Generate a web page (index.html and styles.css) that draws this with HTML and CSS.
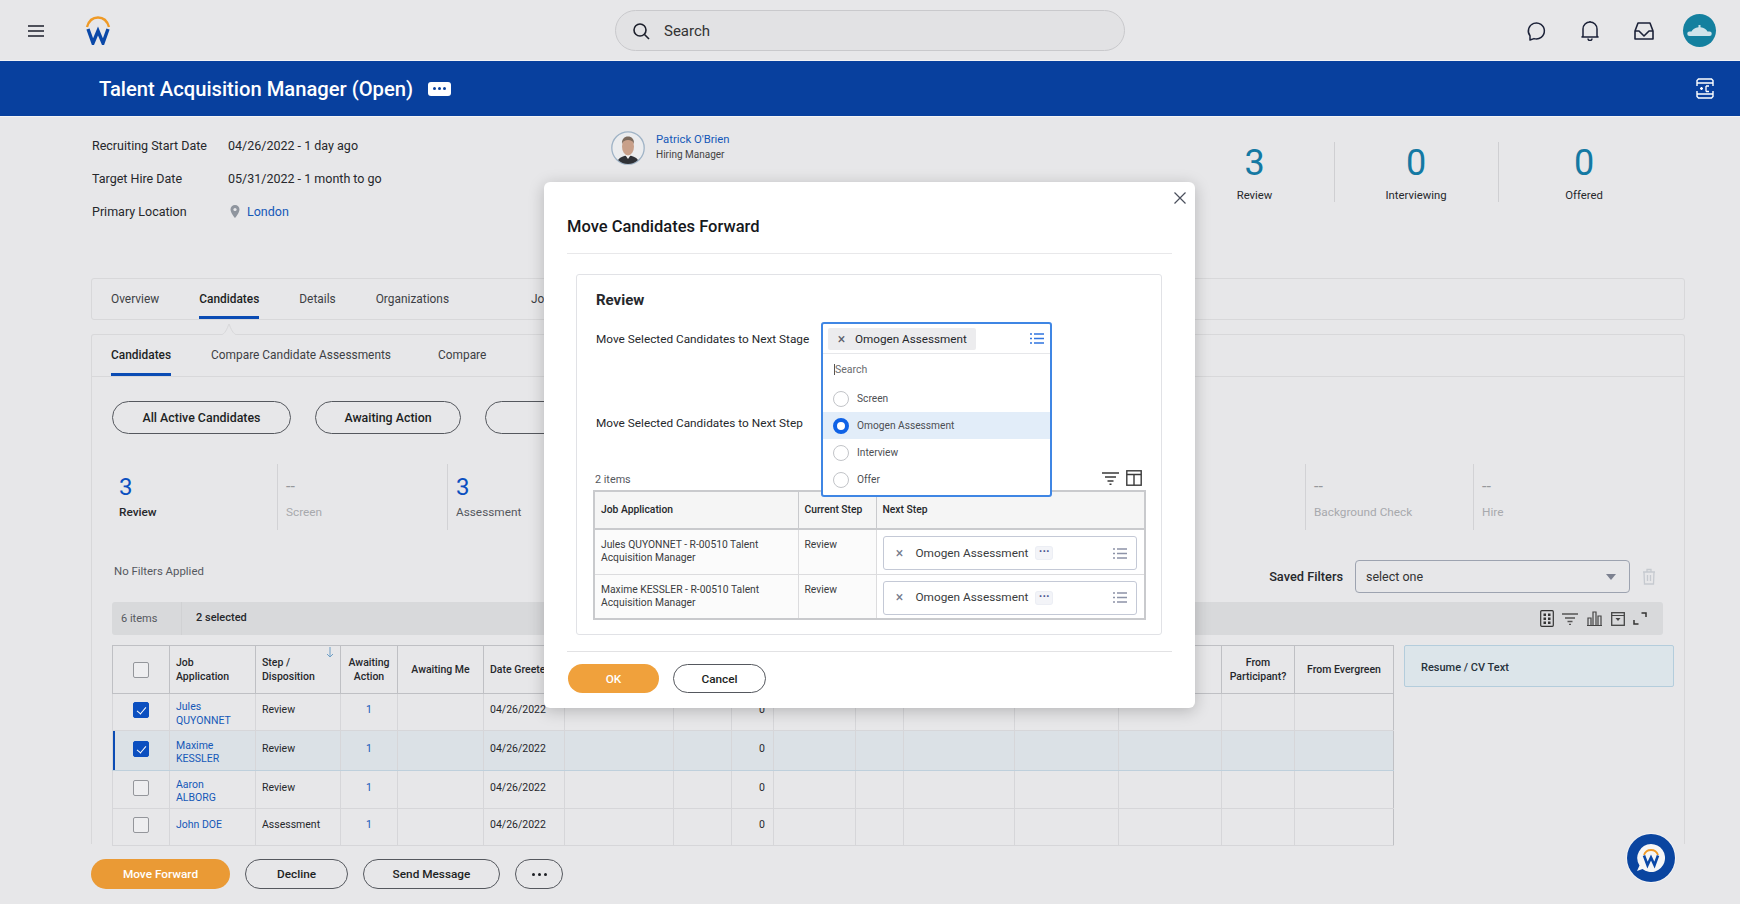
FILE: index.html
```html
<!DOCTYPE html>
<html lang="en">
<head>
    <meta charset="UTF-8">
    <meta name="viewport" content="width=device-width, initial-scale=1.0">
    <title>Talent Acquisition Manager</title>
    <link rel="stylesheet" href="styles.css">
</head>
<body>
<div class="page">
    <header class="topbar">
        <svg class="menu-icon" width="16" height="12" viewBox="0 0 16 12"><path d="M0 1h16M0 6h16M0 11h16" stroke="#1c1f2b" stroke-width="1.7"/></svg>
        <svg class="logo" width="26" height="29" viewBox="0 0 26 29"><path d="M2 11C4 4 8 1.5 13 1.5S22 4 24 11" fill="none" stroke="#ef9a26" stroke-width="2.4"/><path d="M3 13l5 14 5-12 5 12 5-14" fill="none" stroke="#0a48a8" stroke-width="3.4"/></svg>
        <div class="search-pill">
            <svg width="18" height="18" viewBox="0 0 18 18"><circle cx="8" cy="8" r="6" fill="none" stroke="#1c1f2b" stroke-width="1.6"/><path d="M12.5 12.5L17 17" stroke="#1c1f2b" stroke-width="1.6"/></svg>
            <span>Search</span>
        </div>
        <div class="top-icons">
            <svg width="20" height="20" viewBox="0 0 20 20"><path d="M4 19v-4.2A8 8 0 1 1 8 17.6L4 19z" fill="none" stroke="#1c2238" stroke-width="1.5" stroke-linejoin="round"/></svg>
            <svg width="18" height="21" viewBox="0 0 18 21"><path d="M2 16V9a7 7 0 0 1 14 0v7l1 1H1zM9 2V1M7 18.500a2 2 0 0 0 4 0" fill="none" stroke="#1c2238" stroke-width="1.5" stroke-linejoin="round"/></svg>
            <svg width="20" height="18" viewBox="0 0 20 18"><path d="M1 9l3-8h12l3 8v8H1zM1 9h4l5 5 5-5h4" fill="none" stroke="#1c2238" stroke-width="1.6" stroke-linejoin="round"/></svg>
            <div class="avatar">
                <svg width="25" height="11" viewBox="0 0 25 11"><path d="M11.500 0h2v2.200c3.500.3 6 2 7 4.300h2a2.200 2.200 0 0 1 0 4.500h-20a2.200 2.200 0 0 1 0-4.500h2c1-2.300 3.500-4 7-4.300z" fill="#cfe3ea"/></svg>
            </div>
        </div>
    </header>

    <div class="titlebar">
        <h1>Talent Acquisition Manager (Open)</h1>
        <span class="more-badge"><i></i><i></i><i></i></span>
        <svg class="title-icon" width="18" height="21" viewBox="0 0 18 21"><path d="M1 8V2.500L2.500 1h13L17 2.500V8M1 13v5.500L2.500 20h13l1.500-1.500V13M1 5h16M1 16h16" fill="none" stroke="#fff" stroke-width="1.400"/><path d="M4 10.500h3M5.500 9v3M10 8v5.500M10 8h3M10 13.500h3" fill="none" stroke="#fff" stroke-width="1.300"/></svg>
    </div>

    <section class="summary">
        <div class="info">
            <span class="info-label">Recruiting Start Date</span><span>04/26/2022 - 1 day ago</span>
            <span class="info-label">Target Hire Date</span><span>05/31/2022 - 1 month to go</span>
            <span class="info-label">Primary Location</span>
            <span class="location">
                <svg width="10" height="13" viewBox="0 0 10 13"><path d="M5 0a4.500 4.500 0 0 1 4.500 4.500C9.500 8 5 13 5 13S.5 8 .5 4.500A4.500 4.500 0 0 1 5 0z" fill="#8f959e"/><circle cx="5" cy="4.500" r="1.600" fill="#e7e7e9"/></svg>
                <a>London</a>
            </span>
        </div>
        <div class="manager">
            <svg class="manager-photo" width="34" height="34" viewBox="0 0 34 34"><circle cx="17" cy="17" r="16.200" fill="#ebecee" stroke="#9fb3c6" stroke-width="1.300"/><path d="M7 29c2-3 6-4.500 10-4.500S25 26 27 29a14.500 14.500 0 0 1-20 0z" fill="#2f3136"/><path d="M13.500 23h7L17 28z" fill="#f3f3f3"/><ellipse cx="17" cy="15.500" rx="6" ry="9" fill="#c8a08a"/><path d="M11 13c-.5-5 2.500-7.500 6-7.500s6.500 2.500 6 7.500c-1-3-3-4-6-4s-5 1-6 4z" fill="#7c6a5c"/></svg>
            <div>
                <a class="manager-name">Patrick O'Brien</a>
                <div class="manager-role">Hiring Manager</div>
            </div>
        </div>
        <div class="stats">
            <div class="stat stat-a"><b>3</b><span>Review</span></div>
            <div class="stat stat-b"><b>0</b><span>Interviewing</span></div>
            <div class="stat stat-c"><b>0</b><span>Offered</span></div>
        </div>
    </section>

    <nav class="tabs-card">
        <a class="tab">Overview</a>
        <a class="tab active">Candidates</a>
        <a class="tab">Details</a>
        <a class="tab">Organizations</a>
        <a class="tab tab-job">Job</a>
    </nav>

    <section class="candidates-card">
        <svg class="notch" width="16" height="12" viewBox="0 0 16 12"><path d="M0 12C4 11 6 6 8 1c2 5 4 10 8 11" fill="#e7e7e9" stroke="#d8d8da"/></svg>
        <nav class="subtabs">
            <a class="tab active">Candidates</a>
            <a class="tab">Compare Candidate Assessments</a>
            <a class="tab tab-compare">Compare</a>
        </nav>

        <div class="pills">
            <button class="pill pill-all">All Active Candidates</button>
            <button class="pill pill-await">Awaiting Action</button>
            <button class="pill pill-third"></button>
        </div>

        <div class="stages">
            <div class="stage stage-review"><b>3</b><span>Review</span></div>
            <div class="stage stage-mid off"><b>--</b><span>Screen</span></div>
            <div class="stage stage-mid assess"><b>3</b><span>Assessment</span></div>
            <div class="stage-gap"></div>
            <div class="stage stage-bg off"><b>--</b><span>Background Check</span></div>
            <div class="stage stage-hire off"><b>--</b><span>Hire</span></div>
        </div>

        <div class="filters">
            <span class="no-filters">No Filters Applied</span>
            <div class="saved">
                <label>Saved Filters</label>
                <div class="select">select one<i class="caret"></i></div>
                <svg width="14" height="17" viewBox="0 0 14 17"><path d="M1 4h12M5 4V1.500h4V4M2 4l.5 12h9L12 4M5.500 7v6M8.500 7v6" fill="none" stroke="#c6cad0" stroke-width="1.300"/></svg>
            </div>
        </div>

        <div class="toolbar">
            <span class="count">6 items</span>
            <span class="selected">2 selected</span>
            <div class="tool-icons">
                <svg width="14" height="17" viewBox="0 0 14 17"><rect x=".7" y=".7" width="12.600" height="15.600" rx="1" fill="none" stroke="#333" stroke-width="1.200"/><path d="M3.500 3.500h2.500v2.500H3.500zM8 3.500h2.500v2.500H8zM3.500 7.500h2.500v2.500H3.500zM8 7.500h2.500v2.500H8zM3.500 11.500h2.500v2.500H3.500zM8 11.500h2.500v2.500H8z" fill="#333"/></svg>
                <svg width="16" height="12" viewBox="0 0 16 12"><path d="M0 1h16M3 5h10M5.500 8.500h5M7 11.500h2" stroke="#555" stroke-width="1.300"/></svg>
                <svg width="17" height="15" viewBox="0 0 17 15"><path d="M1 14.500h15M2 14V7h3v7M7 14V1h3v13M12 14V5h3v9" fill="none" stroke="#444" stroke-width="1.200"/></svg>
                <svg width="14" height="14" viewBox="0 0 14 14"><rect x=".7" y=".7" width="12.600" height="12.600" fill="none" stroke="#444" stroke-width="1.300"/><path d="M.7 3.500h12.600" stroke="#444"/><path d="M4.500 6h5L7 9z" fill="#444"/></svg>
                <svg width="14" height="13" viewBox="0 0 14 13"><path d="M8.500 1H13v4M1 8v4h4.500" fill="none" stroke="#333" stroke-width="1.500"/></svg>
            </div>
        </div>

        <div class="grid-wrap">
            <table class="cand-table">
                <colgroup>
                    <col class="w57"><col class="w86"><col class="w85"><col class="w57"><col class="w86"><col class="w81">
                    <col class="w109"><col class="w58"><col class="w42"><col class="w82"><col class="w48"><col class="w111">
                    <col class="w104"><col class="w103"><col class="w73"><col class="w99">
                </colgroup>
                <thead>
                    <tr>
                        <th class="box-cell"><i class="check"></i></th>
                        <th>Job Application</th>
                        <th class="sort-th">Step / Disposition<svg class="sort-arrow" width="8" height="11" viewBox="0 0 8 11"><path d="M4 0v10M1 7l3 3 3-3" fill="none" stroke="#6f9fc6" stroke-width="1"/></svg></th>
                        <th class="mid">Awaiting Action</th>
                        <th class="mid">Awaiting Me</th>
                        <th>Date Greeted</th>
                        <th></th><th></th><th></th><th></th><th></th><th></th><th></th><th></th>
                        <th class="mid">From Participant?</th>
                        <th class="mid">From Evergreen</th>
                    </tr>
                </thead>
                <tbody>
                    <tr class="row-a">
                        <td class="box-cell"><i class="check on"></i></td>
                        <td class="name-cell"><a>Jules<br>QUYONNET</a></td><td>Review</td><td class="mid"><a>1</a></td><td></td><td>04/26/2022</td>
                        <td></td><td></td><td class="zero">0</td><td></td><td></td><td></td><td></td><td></td><td></td><td></td>
                    </tr>
                    <tr class="row-b picked">
                        <td class="box-cell"><i class="check on"></i></td>
                        <td class="name-cell"><a>Maxime<br>KESSLER</a></td><td>Review</td><td class="mid"><a>1</a></td><td></td><td>04/26/2022</td>
                        <td></td><td></td><td class="zero">0</td><td></td><td></td><td></td><td></td><td></td><td></td><td></td>
                    </tr>
                    <tr class="row-c">
                        <td class="box-cell"><i class="check"></i></td>
                        <td class="name-cell"><a>Aaron<br>ALBORG</a></td><td>Review</td><td class="mid"><a>1</a></td><td></td><td>04/26/2022</td>
                        <td></td><td></td><td class="zero">0</td><td></td><td></td><td></td><td></td><td></td><td></td><td></td>
                    </tr>
                    <tr class="row-d">
                        <td class="box-cell"><i class="check"></i></td>
                        <td><a>John DOE</a></td><td>Assessment</td><td class="mid"><a>1</a></td><td></td><td>04/26/2022</td>
                        <td></td><td></td><td class="zero">0</td><td></td><td></td><td></td><td></td><td></td><td></td><td></td>
                    </tr>
                </tbody>
            </table>
            <div class="resume-panel">Resume / CV Text</div>
        </div>
    </section>

    <footer class="actions">
        <button class="btn-main">Move Forward</button>
        <button class="btn btn-decline">Decline</button>
        <button class="btn btn-send">Send Message</button>
        <button class="btn btn-dots"><i></i><i></i><i></i></button>
    </footer>

    <div class="fab">
        <svg width="30" height="30" viewBox="0 0 30 30"><path d="M15 1a14 14 0 1 1-8.500 25.100L1 28l2.500-5.500A14 14 0 0 1 15 1z" fill="#f6f6f6"/><path d="M8 12c1.200-3.500 4-5 7-5s5.800 1.500 7 5" fill="none" stroke="#ef9a26" stroke-width="1.800"/><path d="M8 12.500l3.500 9.500 3.500-7.500 3.500 7.500 3.500-9.500" fill="none" stroke="#0a48a8" stroke-width="2.600"/></svg>
    </div>

    <div class="modal">
        <svg class="modal-close" width="12" height="12" viewBox="0 0 12 12"><path d="M.5.500l11 11M11.500.500l-11 11" stroke="#4a4f5c" stroke-width="1.200"/></svg>
        <h2>Move Candidates Forward</h2>
        <div class="modal-card">
            <h3>Review</h3>
            <div class="field-row first">Move Selected Candidates to Next Stage</div>
            <div class="field-row second">Move Selected Candidates to Next Step</div>

            <div class="list-head">
                <span>2 items</span>
                <div class="list-icons">
                    <svg width="17" height="13" viewBox="0 0 17 13"><path d="M0 1h17M3 5h11M5.500 9h6M7.500 12.300h2" stroke="#3a3a3a" stroke-width="1.400"/></svg>
                    <svg width="16" height="16" viewBox="0 0 16 16"><rect x=".8" y=".8" width="14.400" height="14.400" fill="none" stroke="#3a3a3a" stroke-width="1.400"/><path d="M.8 4.500h14.400M8 4.500v10.700" stroke="#3a3a3a" stroke-width="1.400"/></svg>
                </div>
            </div>

            <table class="move-table">
                <colgroup><col class="m204"><col class="m78"><col></colgroup>
                <thead>
                    <tr><th>Job Application</th><th>Current Step</th><th>Next Step</th></tr>
                </thead>
                <tbody>
                    <tr>
                        <td>Jules QUYONNET - R-00510 Talent Acquisition Manager</td>
                        <td>Review</td>
                        <td class="step-cell">
                            <div class="step-field">
                                <span class="x">&times;</span><span>Omogen Assessment</span>
                                <span class="mini-badge">&middot;&middot;&middot;</span>
                                <svg class="step-list" width="14" height="11" viewBox="0 0 14 11"><path d="M0 1h2M4 1h10M0 5.500h2M4 5.500h10M0 10h2M4 10h10" stroke="#8d93a8" stroke-width="1.300"/></svg>
                            </div>
                        </td>
                    </tr>
                    <tr>
                        <td>Maxime KESSLER - R-00510 Talent Acquisition Manager</td>
                        <td>Review</td>
                        <td class="step-cell">
                            <div class="step-field">
                                <span class="x">&times;</span><span>Omogen Assessment</span>
                                <span class="mini-badge">&middot;&middot;&middot;</span>
                                <svg class="step-list" width="14" height="11" viewBox="0 0 14 11"><path d="M0 1h2M4 1h10M0 5.500h2M4 5.500h10M0 10h2M4 10h10" stroke="#8d93a8" stroke-width="1.300"/></svg>
                            </div>
                        </td>
                    </tr>
                </tbody>
            </table>

            <div class="dropdown">
                <div class="dd-top">
                    <div class="chip"><span class="x">&times;</span><span>Omogen Assessment</span></div>
                    <svg width="14" height="11" viewBox="0 0 14 11"><path d="M0 1h2M4 1h10M0 5.500h2M4 5.500h10M0 10h2M4 10h10" stroke="#2f74e0" stroke-width="1.400"/></svg>
                </div>
                <div class="dd-search">Search</div>
                <div class="dd-opt"><i class="radio"></i>Screen</div>
                <div class="dd-opt on"><i class="radio"></i>Omogen Assessment</div>
                <div class="dd-opt"><i class="radio"></i>Interview</div>
                <div class="dd-opt"><i class="radio"></i>Offer</div>
            </div>
        </div>
        <div class="modal-foot">
            <button class="btn-main btn-ok">OK</button>
            <button class="btn btn-cancel">Cancel</button>
        </div>
    </div>
</div>
</body>
</html>
```

FILE: styles.css
```css
* {
    box-sizing: border-box;
}

body {
    margin: 0;
    font-family: Roboto, "Liberation Sans", sans-serif;
    font-size: 12.5px;
    color: #26282c;
    background-color: #e7e7e9;
}

.page {
    position: relative;
    width: 1740px;
    height: 904px;
    overflow: hidden;
    background-color: #e7e7e9;
}

a {
    color: #1558b8;
}

/* top bar */
.topbar {
    height: 61px;
    display: flex;
    align-items: center;
    padding-left: 28px;
}

.logo {
    margin-left: 41px;
    margin-top: -1px;
}

.search-pill {
    width: 510px;
    height: 41px;
    margin-left: 504px;
    display: flex;
    align-items: center;
    gap: 14px;
    padding-left: 16px;
    font-size: 15px;
    color: #333;
    background-color: #e2e2e4;
    border: 1px solid #c9c9cc;
    border-radius: 21px;
}

.top-icons {
    margin-left: auto;
    margin-right: 24px;
    display: flex;
    align-items: center;
    gap: 35px;
}

.avatar {
    width: 33px;
    height: 33px;
    margin-left: -6px;
    display: flex;
    align-items: center;
    justify-content: center;
    border-radius: 50%;
    background-color: #14809f;
}

.titlebar {
    height: 55px;
    display: flex;
    align-items: center;
    padding: 0 26px 0 99px;
    background-color: #08409e;
    color: #fff;
    box-shadow: 0 -1px 0 #f3f3f5, 0 1px 0 #f3f3f5;
}

.titlebar h1 {
    margin: 0;
    font-size: 20.2px;
    font-weight: 500;
}

.more-badge {
    width: 23px;
    height: 14px;
    margin-left: 15px;
    display: flex;
    align-items: center;
    justify-content: center;
    gap: 2px;
    border-radius: 3px;
    background-color: #fff;
}

.more-badge i {
    width: 3px;
    height: 3px;
    border-radius: 50%;
    background-color: #08409e;
}

.title-icon {
    margin-left: auto;
}

/* summary */
.summary {
    height: 162px;
    display: flex;
    align-items: flex-start;
    padding-left: 92px;
}

.info {
    width: 519px;
    display: grid;
    grid-template-columns: 136px auto;
    grid-auto-rows: 33.2px;
    align-items: center;
    padding-top: 13px;
}

.location {
    display: flex;
    align-items: center;
    gap: 7px;
    padding-left: 2px;
}

.manager {
    display: flex;
    align-items: flex-start;
    gap: 11px;
    padding-top: 15px;
}

.manager-name {
    display: block;
    padding-top: 2px;
    font-size: 11.3px;
}

.manager-role {
    margin-top: 3px;
    font-size: 10px;
    color: #444;
}

.stats {
    display: flex;
    margin-left: 446px;
    padding-top: 26px;
}

.stat {
    height: 60px;
    display: flex;
    flex-direction: column;
    align-items: center;
    font-size: 11.3px;
    border-left: 1px solid #cfcfd2;
}

.stat b {
    padding-top: 1px;
    font-size: 36px;
    font-weight: 400;
    line-height: 40px;
    color: #1479a3;
}

.stat span {
    margin-top: 6px;
}

.stat-a {
    width: 158px;
    border-left: 0;
}

.stat-b {
    width: 164px;
}

.stat-c {
    width: 172px;
}

/* tabs */
.tabs-card {
    width: 1594px;
    height: 42px;
    margin-left: 91px;
    display: flex;
    gap: 40px;
    padding-left: 19px;
    border: 1px solid #d8d8da;
    border-radius: 3px;
}

.tab {
    display: block;
    height: 100%;
    font-size: 11.9px;
    line-height: 40px;
    color: #3d3f44;
    white-space: nowrap;
}

.tab.active {
    font-weight: 500;
    color: #1d1f24;
    border-bottom: 3px solid #0b4cb4;
}

.tab-job {
    margin-left: 42px;
}

.candidates-card {
    position: relative;
    width: 1594px;
    height: 510px;
    margin: 14px 0 0 91px;
    padding: 0 0 0 20px;
    border: 1px solid #d8d8da;
    border-bottom: 0;
    border-radius: 3px 3px 0 0;
}

.notch {
    position: absolute;
    top: -12px;
    left: 129px;
}

.subtabs {
    height: 42px;
    margin-left: -20px;
    display: flex;
    gap: 40px;
    padding-left: 19px;
    border-bottom: 1px solid #d8d8da;
}

.tab-compare {
    margin-left: 7px;
}

.pills {
    display: flex;
    gap: 24px;
    margin-top: 24px;
}

.pill {
    height: 33px;
    font: 500 12.4px Roboto, sans-serif;
    color: #1d1f24;
    background-color: transparent;
    border: 1px solid #55585e;
    border-radius: 17px;
}

.pill-all {
    width: 179px;
}

.pill-await {
    width: 146px;
}

.pill-third {
    width: 150px;
}

.stages {
    height: 66px;
    margin-top: 30px;
    display: flex;
    font-size: 11.8px;
}

.stage {
    display: flex;
    flex-direction: column;
    padding-left: 8px;
    border-left: 1px solid #d2d2d5;
}

.stage b {
    height: 38px;
    padding-top: 9px;
    font-size: 24px;
    font-weight: 400;
    line-height: 28px;
    color: #0b4fc0;
}

.stage span {
    padding-top: 3px;
}

.stage-review {
    width: 165px;
    padding-left: 7px;
    border-left: 0;
}

.stage-review span {
    font-weight: 500;
}

.stage-mid {
    width: 170px;
}

.off b {
    font-size: 16px;
    color: #96989c;
}

.off span {
    color: #a7a9ad;
}

.assess span {
    color: #55585e;
}

.stage-gap {
    flex: 1;
}

.stage-bg {
    width: 168px;
}

.stage-hire {
    width: 190px;
    margin-right: 21px;
}

.filters {
    height: 33px;
    margin-top: 30px;
    display: flex;
    align-items: center;
    justify-content: space-between;
}

.no-filters {
    margin-top: -11px;
    padding-left: 2px;
    font-size: 11.4px;
    color: #55585e;
}

.saved {
    display: flex;
    align-items: center;
    margin-right: 28px;
}

.saved label {
    margin-right: 12px;
    font-size: 12.8px;
    font-weight: 500;
}

.select {
    position: relative;
    width: 275px;
    height: 33px;
    margin-right: 12px;
    padding-left: 10px;
    font-size: 12.5px;
    line-height: 31px;
    color: #333;
    border: 1px solid #9da3b0;
    border-radius: 4px;
}

.caret {
    position: absolute;
    top: 13px;
    right: 13px;
    border-top: 6px solid #7c8190;
    border-left: 5px solid transparent;
    border-right: 5px solid transparent;
}

.toolbar {
    width: 1551px;
    height: 33px;
    margin-top: 9px;
    display: flex;
    align-items: center;
    border-radius: 3px;
    background-color: #d8d9db;
    font-size: 11px;
}

.count {
    width: 69px;
    padding-left: 9px;
    color: #55585e;
}

.selected {
    height: 100%;
    padding-left: 14px;
    line-height: 32px;
    font-weight: 500;
    border-left: 1px solid #d0d1d3;
}

.tool-icons {
    margin-left: auto;
    margin-right: 16px;
    display: flex;
    align-items: center;
    gap: 8px;
}

/* candidates table */
.grid-wrap {
    display: flex;
    align-items: flex-start;
    gap: 10px;
    margin-top: 10px;
}

.cand-table {
    width: 1281px;
    flex: none;
    table-layout: fixed;
    border-collapse: collapse;
    font-size: 10.5px;
}

.cand-table th,
.cand-table td {
    padding: 0 6px;
    text-align: left;
    border: 1px solid #cfd0d3;
    line-height: 13.5px;
}

.cand-table td {
    padding-bottom: 4px;
    border-color: #d6d6d9;
}

.cand-table td.name-cell {
    padding-top: 3px;
    padding-bottom: 0;
}

.cand-table thead tr {
    height: 48px;
}

.cand-table th {
    font-weight: 500;
    border-color: #bfc0c4;
    border-bottom-width: 1px;
}

.cand-table tbody td:last-child,
.cand-table thead th:last-child {
    border-right-color: #bfc0c4;
}

.cand-table .mid {
    text-align: center;
}

.sort-th {
    position: relative;
}

.sort-arrow {
    position: absolute;
    top: 1px;
    right: 6px;
}

.box-cell {
    text-align: center !important;
}

.check {
    display: inline-block;
    width: 16px;
    height: 16px;
    vertical-align: middle;
    border: 1px solid #94969b;
    border-radius: 2px;
    background-color: #eeeef0;
}

.check.on {
    position: relative;
    border-color: #0b4fc0;
    background-color: #0b4fc0;
}

.check.on::after {
    content: "";
    position: absolute;
    top: 2px;
    left: 5px;
    width: 4px;
    height: 8px;
    border: solid #fff;
    border-width: 0 1.500px 1.500px 0;
    transform: rotate(40deg);
}

.row-a {
    height: 37px;
}

.row-b {
    height: 40px;
}

.row-c {
    height: 38px;
}

.row-d {
    height: 37px;
}

.picked td {
    background-color: #dbe1e6;
    border-top-color: #bfd0dc;
    border-bottom-color: #bfd0dc;
}

.picked td:first-child {
    box-shadow: inset 2px 0 0 #0b4cb4;
}

.cand-table td.zero {
    padding: 0 8px 4px 0;
    text-align: right;
}

.resume-panel {
    width: 270px;
    height: 42px;
    padding-left: 16px;
    font-size: 11px;
    font-weight: 500;
    line-height: 43px;
    color: #27323c;
    background-color: #dce5ea;
    border: 1px solid #b4cddc;
    border-radius: 2px;
}

/* bottom buttons */
.actions {
    height: 30px;
    margin: 15px 0 0 91px;
    display: flex;
    gap: 15px;
}

.btn-main,
.btn {
    height: 30px;
    font: 500 11.8px Roboto, sans-serif;
    border-radius: 15px;
}

.btn-main {
    width: 139px;
    color: #fff;
    background-color: #ea9a35;
    border: 0;
}

.btn {
    color: #1d1f24;
    background-color: transparent;
    border: 1px solid #55585e;
}

.btn-decline {
    width: 103px;
}

.btn-send {
    width: 137px;
}

.btn-dots {
    width: 48px;
    display: flex;
    align-items: center;
    justify-content: center;
    gap: 3px;
}

.btn-dots i {
    width: 3px;
    height: 3px;
    border-radius: 50%;
    background-color: #1d1f24;
}

.fab {
    position: absolute;
    top: 834px;
    left: 1627px;
    width: 48px;
    height: 48px;
    display: flex;
    align-items: center;
    justify-content: center;
    border-radius: 50%;
    background-color: #0a45a0;
    box-shadow: 0 0 0 1px #f3f3f5;
}

/* modal */
.modal {
    position: absolute;
    top: 182px;
    left: 544px;
    width: 651px;
    height: 526px;
    padding: 0 23px;
    background-color: #fff;
    border-radius: 6px;
    box-shadow: 0 3px 16px rgba(0, 0, 0, 0.22);
}

.modal-close {
    position: absolute;
    top: 10px;
    right: 9px;
}

.modal h2 {
    height: 72px;
    margin: 0;
    padding-top: 35px;
    font-size: 16.5px;
    font-weight: 500;
    line-height: 20px;
    color: #16181c;
    border-bottom: 1px solid #e8e8ea;
}

.modal-card {
    position: relative;
    width: 586px;
    height: 361px;
    margin: 20px 0 0 9px;
    padding: 0 15px 0 19px;
    border: 1px solid #e1e2e6;
    border-radius: 3px;
}

.modal-card h3 {
    margin: 16px 0 0;
    font-size: 15px;
    font-weight: 700;
    line-height: 18px;
}

.field-row {
    position: absolute;
    left: 19px;
    font-size: 11.8px;
    color: #26282c;
}

.first {
    top: 57px;
}

.second {
    top: 141px;
}

.list-head {
    display: flex;
    align-items: center;
    justify-content: space-between;
    height: 20px;
    margin: 160px 0 0 -1px;
    padding: 0 3px 2px 0;
    font-size: 10.8px;
    color: #55585e;
}

.list-head span {
    padding-top: 2px;
}

.list-icons {
    display: flex;
    align-items: center;
    gap: 7px;
    margin-right: 1px;
}

.move-table {
    width: 553px;
    margin: 1px 0 0 -3px;
    table-layout: fixed;
    border-collapse: collapse;
    font-size: 10.3px;
    border: 2px solid #c9cacd;
}

.m204 {
    width: 204px;
}

.m78 {
    width: 78px;
}

.move-table th {
    height: 38px;
    padding: 0 6px 2px;
    text-align: left;
    vertical-align: middle;
    font-weight: 500;
    background-color: #f5f5f5;
    border: 1px solid #c9cacd;
    border-bottom: 2px solid #c9cacd;
}

.move-table td {
    height: 45px;
    padding: 8px 6px 0;
    vertical-align: top;
    line-height: 13px;
    color: #3a3c40;
    background-color: #fbfbfb;
    border: 1px solid #dcdcde;
}

.move-table td.step-cell {
    padding: 6px 7px 0 6px;
    background-color: #fff;
}

.step-field {
    height: 34px;
    display: flex;
    align-items: center;
    font-size: 11.8px;
    color: #3a3c40;
    border: 1px solid #c4c9d6;
    border-radius: 3px;
}

.step-field .x {
    width: 32px;
    text-align: center;
    font-size: 14px;
    color: #747a8c;
}

.mini-badge {
    width: 16px;
    height: 12px;
    margin-left: 8px;
    font-size: 12px;
    font-weight: 700;
    line-height: 11px;
    text-align: center;
    color: #4b5390;
    border-radius: 2px;
    background-color: #f3f4f8;
    box-shadow: 0 0 0 1px #eceef4;
}

.step-list {
    margin-left: auto;
    margin-right: 9px;
}

.dropdown {
    position: absolute;
    top: 47px;
    left: 244px;
    width: 231px;
    height: 175px;
    background-color: #fff;
    border: 2px solid #3f86e4;
    border-radius: 3px;
}

.dd-top {
    height: 30px;
    display: flex;
    align-items: center;
    justify-content: space-between;
    padding: 0 6px 0 5px;
    border-bottom: 1px solid #e6e7ea;
}

.chip {
    width: 148px;
    height: 22px;
    display: flex;
    align-items: center;
    font-size: 11.7px;
    background-color: #ececee;
    border-radius: 2px;
}

.chip .x {
    width: 27px;
    text-align: center;
    font-size: 14px;
    color: #5c606b;
}

.dd-search {
    height: 31px;
    margin-left: 11px;
    padding-left: 1px;
    font-size: 10.5px;
    line-height: 31px;
    color: #6a6c70;
    background: linear-gradient(#555, #555) no-repeat 0 10px / 1px 11px;
}

.dd-opt {
    height: 27px;
    display: flex;
    align-items: center;
    gap: 8px;
    padding-left: 10px;
    font-size: 10.2px;
    color: #4d4f54;
}

.dd-opt.on {
    background-color: #e2edf9;
}

.radio {
    width: 16px;
    height: 16px;
    border: 1px solid #c2c4c8;
    border-radius: 50%;
    background-color: #fff;
}

.on .radio {
    border: 4px solid #0f62e6;
}

.modal-foot {
    height: 57px;
    margin-top: 16px;
    display: flex;
    gap: 14px;
    padding: 12px 0 0 1px;
    border-top: 1px solid #e2e2e4;
}

.modal-foot button {
    height: 29px;
}

.btn-ok {
    width: 91px;
    background-color: #f0a13c;
}

.btn-cancel {
    width: 93px;
}

.w57 { width: 57px; }
.w86 { width: 86px; }
.w85 { width: 85px; }
.w81 { width: 81px; }
.w109 { width: 109px; }
.w58 { width: 58px; }
.w42 { width: 42px; }
.w82 { width: 82px; }
.w48 { width: 48px; }
.w111 { width: 111px; }
.w104 { width: 104px; }
.w103 { width: 103px; }
.w73 { width: 73px; }
.w99 { width: 99px; }
```
